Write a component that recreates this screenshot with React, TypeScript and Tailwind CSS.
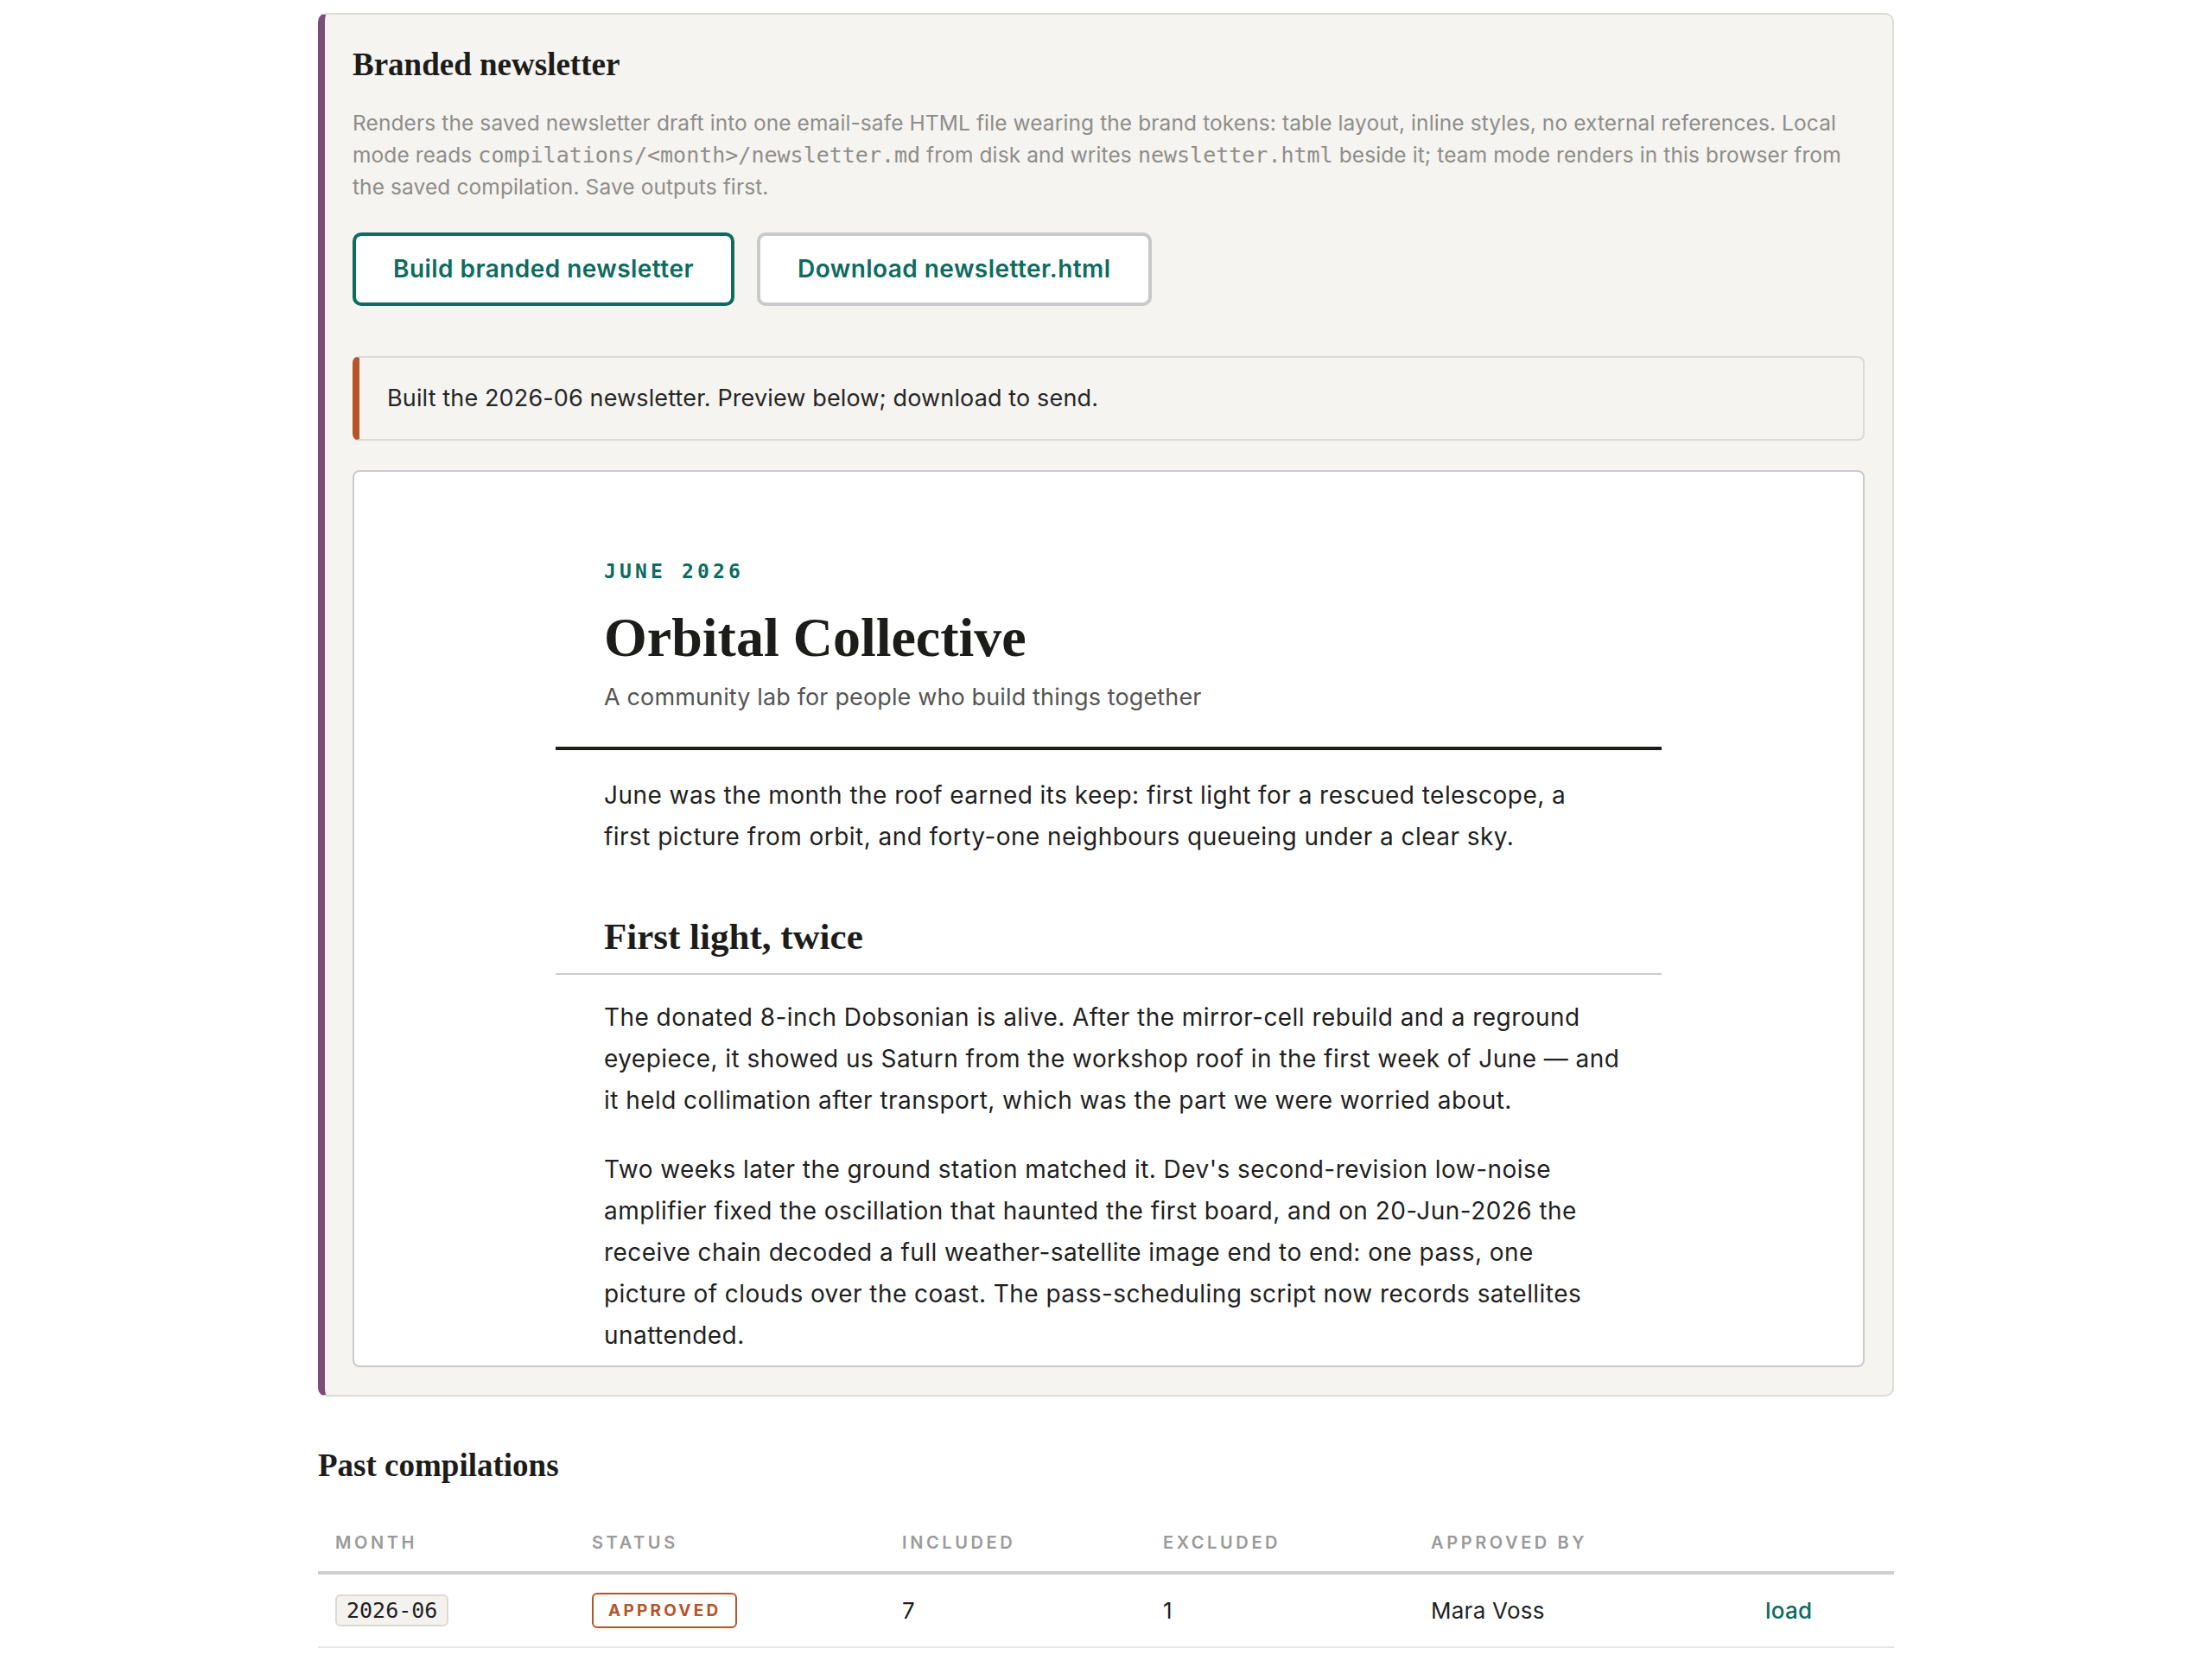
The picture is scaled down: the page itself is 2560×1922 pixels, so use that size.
import React from "react";

const serif = "font-['Liberation_Serif',_'Times_New_Roman',_serif]";
const sans = "font-['Inter',_'Noto_Sans',_sans-serif]";
const mono = "font-['DejaVu_Sans_Mono',_'Liberation_Mono',_monospace]";

type Compilation = {
  month: string;
  status: string;
  included: number;
  excluded: number;
  approvedBy: string;
};

const compilations: Compilation[] = [
  { month: "2026-06", status: "Approved", included: 7, excluded: 1, approvedBy: "Mara Voss" },
];

const body = `${sans} text-[28px] leading-[48px] tracking-[0.016em] text-[#1f1f1f]`;

function NewsletterPreview() {
  return (
    <div className="mt-[34px] h-[1038px] overflow-hidden rounded-[8px] border-2 border-[#cbcbcb] bg-white">
      <div className="mx-auto w-[1280px] pt-[99px]">
        <div className="px-[56px] pb-[38px]">
          <div className={`${mono} text-[23px] font-bold uppercase leading-[32px] tracking-[0.18em] text-[#0e6b5f]`}>
            June 2026
          </div>
          <h1 className={`${serif} mt-[25px] text-[64px] font-bold leading-[72px] text-[#1c1c1a]`}>
            Orbital Collective
          </h1>
          <p className={`${sans} mt-[14px] text-[27px] leading-[38px] tracking-[0.005em] text-[#555555]`}>
            A community lab for people who build things together
          </p>
        </div>
        <div className="h-[4px] bg-[#1c1c1a]" />
        <div className={`${body} px-[56px] pt-[28px]`}>
          <p>
            June was the month the roof earned its keep: first light for a rescued telescope, a first picture
            from orbit, and forty-one neighbours queueing under a clear sky.
          </p>
        </div>
        <h2 className={`${serif} mt-[68px] px-[56px] text-[43px] font-bold leading-[48px] text-[#1c1c1a]`}>
          First light, twice
        </h2>
        <div className="mt-[18px] h-[2px] bg-[#cccccc]" />
        <div className={`${body} pl-[56px] pr-[48px] pt-[25px]`}>
          <p>
            The donated 8-inch Dobsonian is alive. After the mirror-cell rebuild and a reground eyepiece, it
            showed us Saturn from the workshop roof in the first week of June — and it held collimation after
            transport, which was the part we were worried about.
          </p>
          <p className="mt-[32px]">
            Two weeks later the ground station matched it. Dev's second-revision low-noise amplifier fixed the
            oscillation that haunted the first board, and on 20-Jun-2026 the receive chain decoded a full
            weather-satellite image end to end: one pass, one picture of clouds over the coast. The
            pass-scheduling script now records satellites unattended.
          </p>
        </div>
      </div>
    </div>
  );
}

function BrandedNewsletterCard() {
  return (
    <section className="rounded-[10px] border-2 border-l-[8px] border-[#dddbd5] border-l-[#7b4e78] bg-[#f5f4f0] p-8">
      <h2 className={`${serif} text-[37px] font-bold leading-[52px] text-[#1c1c1a]`}>Branded newsletter</h2>
      <p className={`${sans} mt-[23px] text-[24.5px] leading-[37px] tracking-[0.004em] text-[#8e8d8a]`}>
        Renders the saved newsletter draft into one email-safe HTML file wearing the brand tokens: table layout,
        inline styles, no external references. Local mode reads{" "}
        <code className={`${mono} text-[25px] tracking-normal`}>compilations/&lt;month&gt;/newsletter.md</code>{" "}
        from disk and writes <code className={`${mono} text-[25px] tracking-normal`}>newsletter.html</code> beside
        it; team mode renders in this browser from the saved compilation. Save outputs first.
      </p>
      <div className="mt-[34px] flex gap-[26px]">
        <button
          type="button"
          className={`${sans} rounded-[10px] border-4 border-[#0e6b5f] bg-white px-[43px] py-5 text-[28px] font-semibold leading-[37px] tracking-[0.016em] text-[#0e6b5f]`}
        >
          Build branded newsletter
        </button>
        <button
          type="button"
          className={`${sans} rounded-[10px] border-4 border-[#c9c9c9] bg-white px-[43px] py-5 text-[28px] font-semibold leading-[37px] tracking-[0.016em] text-[#0e6b5f]`}
        >
          Download newsletter.html
        </button>
      </div>
      <div className="mt-[58px] rounded-[8px] border-2 border-l-[8px] border-[#dcdad4] border-l-[#b5552a] bg-[#f5f4f0] px-8 py-7">
        <p className={`${sans} text-[27px] leading-[38px] tracking-[0.005em] text-[#262626]`}>
          Built the 2026-06 newsletter. Preview below; download to send.
        </p>
      </div>
      <NewsletterPreview />
    </section>
  );
}

function PastCompilations() {
  const th = `${sans} pb-[19px] pl-5 text-left text-[20px] font-semibold uppercase leading-[28px] tracking-[0.18em] text-[#9a9a9a]`;
  const td = `${sans} py-[21px] pl-5 align-middle text-[26px] tracking-[0.01em] text-[#1f1f1f]`;
  return (
    <section className="mt-[60px]">
      <h2 className={`${serif} text-[37px] font-bold leading-[40px] text-[#1c1c1a]`}>Past compilations</h2>
      <table className="mt-[55px] w-full table-fixed border-collapse">
        <thead>
          <tr className="border-b-4 border-[#cfcfcf]">
            <th className={`${th} w-[297px]`}>Month</th>
            <th className={`${th} w-[359px]`}>Status</th>
            <th className={`${th} w-[302px]`}>Included</th>
            <th className={`${th} w-[310px]`}>Excluded</th>
            <th className={`${th} w-[387px]`}>Approved by</th>
            <th className={th} aria-label="Actions" />
          </tr>
        </thead>
        <tbody>
          {compilations.map((c) => (
            <tr key={c.month} className="border-b-2 border-[#e6e6e6]">
              <td className="py-[21px] pl-5 align-middle">
                <span
                  className={`${mono} inline-block rounded-[6px] border-2 border-[#dcdad4] bg-[#f3f2ee] px-[11px] text-[25px] leading-[33px] text-[#1f1f1f]`}
                >
                  {c.month}
                </span>
              </td>
              <td className="py-[21px] pl-5 align-middle">
                <span
                  className={`${sans} inline-block rounded-[6px] border-2 border-[#b5552a] px-[17px] text-[19px] font-bold uppercase leading-[37px] tracking-[0.17em] text-[#b5552a]`}
                >
                  {c.status}
                </span>
              </td>
              <td className={td}>{c.included}</td>
              <td className={td}>{c.excluded}</td>
              <td className={td}>{c.approvedBy}</td>
              <td className={td}>
                <a href="#" className="font-medium text-[#0e6b5f]">
                  load
                </a>
              </td>
            </tr>
          ))}
        </tbody>
      </table>
    </section>
  );
}

export default function App() {
  return (
    <div className="min-h-screen bg-white pt-[15px] pb-10">
      <div className="mx-auto w-[1824px]">
        <BrandedNewsletterCard />
        <PastCompilations />
      </div>
    </div>
  );
}
